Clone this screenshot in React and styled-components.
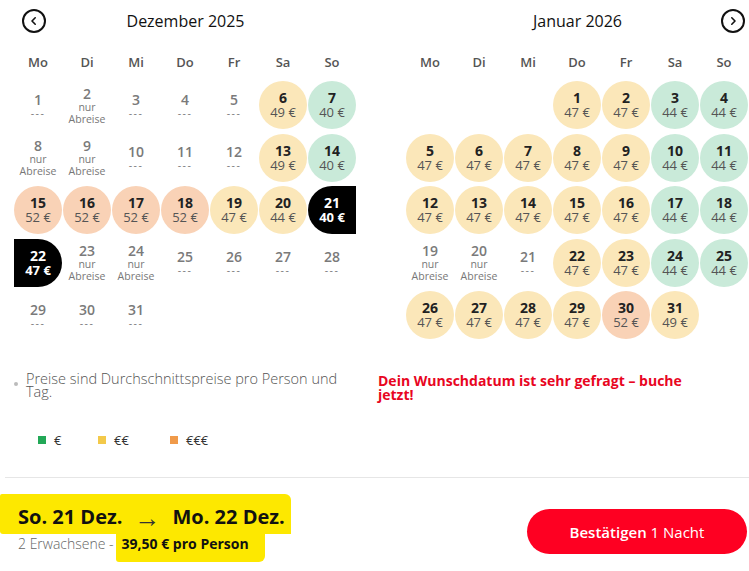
import React from 'react'
import styled, { createGlobalStyle, css } from 'styled-components'

const GlobalStyle = createGlobalStyle`
  * { box-sizing: border-box; }
  body {
    margin: 0;
    background: #fff;
    font-family: "Open Sans", "Noto Sans", sans-serif;
    color: #222;
  }
`

const Page = styled.div`
  width: 749px;
  height: 571px;
  overflow: hidden;
  display: flex;
  flex-direction: column;
`

const Months = styled.div`
  display: flex;
  gap: 49px;
  padding-left: 14px;
`

const Month = styled.section`
  width: 343px;
`

const MonthHead = styled.div`
  height: 42px;
  display: grid;
  grid-template-columns: 1fr auto 1fr;
  align-items: center;
`

const MonthTitle = styled.h2`
  margin: 0;
  font-size: 16px;
  font-weight: 500;
  color: #111;
`

const NavButton = styled.button`
  width: 24px;
  height: 24px;
  border-radius: 50%;
  border: 2px solid #111;
  background: #fff;
  padding: 0;
  display: flex;
  align-items: center;
  justify-content: center;
  cursor: pointer;
  justify-self: ${p => (p.$side === 'right' ? 'end' : 'start')};
  margin: ${p => (p.$side === 'right' ? '0 4px 0 0' : '0 0 0 8px')};
`

const Weekdays = styled.div`
  height: 39px;
  display: grid;
  grid-template-columns: repeat(7, 48px);
  column-gap: 1px;
  align-items: center;
`

const Weekday = styled.span`
  text-align: center;
  font-size: 13px;
  font-weight: 600;
  color: #555;
`

const Days = styled.div`
  display: grid;
  grid-template-columns: repeat(7, 48px);
  grid-auto-rows: 48px;
  column-gap: 1px;
  row-gap: 4.5px;
`

const tones = {
  low: '#c9ead9',
  mid: '#fbe7b9',
  high: '#f9d2b6',
}

const Day = styled.div`
  display: flex;
  flex-direction: column;
  align-items: center;
  justify-content: center;
  text-align: center;
  border-radius: 50%;
  background: ${p => (p.$tone ? tones[p.$tone] : 'transparent')};
  ${p => p.$sel === 'start' && css`
    background: #000;
    border-radius: 24px 0 0 24px;
  `}
  ${p => p.$sel === 'end' && css`
    background: #000;
    border-radius: 0 24px 24px 0;
  `}
`

const DayNum = styled.span`
  display: block;
  font-size: 14px;
  line-height: 15px;
  height: 15px;
  font-weight: ${p => (p.$off ? 600 : 700)};
  color: ${p => (p.$sel ? '#fff' : p.$off ? '#7a7a7a' : '#222')};
`

const Price = styled.span`
  display: block;
  font-size: 13px;
  line-height: 15px;
  height: 15px;
  color: ${p => (p.$sel ? '#fff' : '#555')};
  font-weight: ${p => (p.$sel ? 700 : 400)};
`

const Note = styled.span`
  display: block;
  font-size: 10.5px;
  line-height: 12px;
  height: 12px;
  color: #777;
  letter-spacing: ${p => (p.$dash ? '1.5px' : '0')};
`

const Info = styled.div`
  display: flex;
  padding: 33px 0 0 14px;
  height: 138px;
`

const InfoLeft = styled.div`
  width: 364px;
`

const InfoLine = styled.p`
  margin: 0;
  display: flex;
  gap: 8px;
  font-size: 14.5px;
  line-height: 13px;
  font-weight: 300;
  color: #555;
  padding-right: 14px;
  &::before {
    content: '';
    flex-shrink: 0;
    width: 4px;
    height: 4px;
    margin-top: 10px;
    border-radius: 50%;
    background: #bbb;
  }
`

const Legend = styled.ul`
  list-style: none;
  margin: 33px 0 0 24px;
  padding: 0;
  display: flex;
`

const LegendItem = styled.li`
  display: flex;
  align-items: center;
  gap: 8px;
  width: ${p => p.$w}px;
  font-size: 13px;
  color: #333;
  &::before {
    content: '';
    width: 8px;
    height: 8px;
    background: ${p => p.$color};
  }
`

const Urgent = styled.p`
  margin: 2px 0 0;
  width: 330px;
  font-size: 14px;
  line-height: 13.5px;
  font-weight: 700;
  color: #e8061f;
`

const Divider = styled.hr`
  margin: 0 0 0 5px;
  border: 0;
  border-top: 1px solid #e6e6e6;
`

const Footer = styled.footer`
  display: flex;
  align-items: flex-start;
  justify-content: space-between;
  padding: 16px 2px 0 0;
`

const Summary = styled.div`
  display: flex;
  flex-direction: column;
  align-items: flex-start;
`

const DatesMark = styled.div`
  display: flex;
  align-items: center;
  gap: 12px;
  background: #fde800;
  padding: 10px 6px 4px 18px;
  border-radius: 2px 6px 0 3px;
  font-size: 20px;
  line-height: 26px;
  font-weight: 700;
  color: #111;
`

const Arrow = styled.span`
  font-weight: 300;
  font-size: 26px;
  color: #333;
`

const Guests = styled.p`
  margin: 0;
  padding-left: 18px;
  font-size: 14px;
  line-height: 20px;
  font-weight: 300;
  color: #666;
`

const PriceMark = styled.span`
  background: #fde800;
  margin-left: 2px;
  padding: 4px 16px 9px 6px;
  border-radius: 0 0 6px 3px;
  font-weight: 700;
  color: #111;
`

const Confirm = styled.button`
  margin-top: 15px;
  width: 220px;
  height: 45px;
  border: 0;
  border-radius: 23px;
  background: #fe0022;
  color: #fff;
  font-family: inherit;
  font-size: 15px;
  font-weight: 400;
  cursor: pointer;
  b { font-weight: 600; }
`

const Chevron = ({ dir }) => (
  <svg width="10" height="10" viewBox="0 0 10 10" fill="none" stroke="#111" strokeWidth="1.6" strokeLinecap="round" strokeLinejoin="round">
    {dir === 'left' ? <path d="M6.2 1.8 3 5l3.2 3.2" /> : <path d="M3.8 1.8 7 5 3.8 8.2" />}
  </svg>
)

const weekdays = ['Mo', 'Di', 'Mi', 'Do', 'Fr', 'Sa', 'So']

// null = "---", 'a' = nur Abreise, sonst [Preis, Ton]
const december = {
  offset: 0,
  days: [
    null, 'a', null, null, null, [49, 'mid'], [40, 'low'],
    'a', 'a', null, null, null, [49, 'mid'], [40, 'low'],
    [52, 'high'], [52, 'high'], [52, 'high'], [52, 'high'], [47, 'mid'], [44, 'mid'], [40, 'start'],
    [47, 'end'], 'a', 'a', null, null, null, null,
    null, null, null,
  ],
}

const january = {
  offset: 3,
  days: [
    [47, 'mid'], [47, 'mid'], [44, 'low'], [44, 'low'],
    [47, 'mid'], [47, 'mid'], [47, 'mid'], [47, 'mid'], [47, 'mid'], [44, 'low'], [44, 'low'],
    [47, 'mid'], [47, 'mid'], [47, 'mid'], [47, 'mid'], [47, 'mid'], [44, 'low'], [44, 'low'],
    'a', 'a', null, [47, 'mid'], [47, 'mid'], [44, 'low'], [44, 'low'],
    [47, 'mid'], [47, 'mid'], [47, 'mid'], [47, 'mid'], [52, 'high'], [49, 'mid'],
  ],
}

function DayCell({ n, d }) {
  if (d === null) {
    return (
      <Day>
        <DayNum $off>{n}</DayNum>
        <Note $dash>---</Note>
      </Day>
    )
  }
  if (d === 'a') {
    return (
      <Day>
        <DayNum $off>{n}</DayNum>
        <Note>nur</Note>
        <Note>Abreise</Note>
      </Day>
    )
  }
  const [price, kind] = d
  const sel = kind === 'start' || kind === 'end' ? kind : null
  return (
    <Day $tone={sel ? null : kind} $sel={sel}>
      <DayNum $sel={sel}>{n}</DayNum>
      <Price $sel={sel}>{price} €</Price>
    </Day>
  )
}

function MonthView({ title, data, nav }) {
  return (
    <Month>
      <MonthHead>
        {nav === 'left' ? <NavButton $side="left" aria-label="zurück"><Chevron dir="left" /></NavButton> : <span />}
        <MonthTitle>{title}</MonthTitle>
        {nav === 'right' ? <NavButton $side="right" aria-label="weiter"><Chevron dir="right" /></NavButton> : <span />}
      </MonthHead>
      <Weekdays>
        {weekdays.map(w => <Weekday key={w}>{w}</Weekday>)}
      </Weekdays>
      <Days>
        {Array.from({ length: data.offset }).map((_, i) => <div key={'e' + i} />)}
        {data.days.map((d, i) => <DayCell key={i} n={i + 1} d={d} />)}
      </Days>
    </Month>
  )
}

export default function App() {
  return (
    <Page>
      <GlobalStyle />
      <Months>
        <MonthView title="Dezember 2025" data={december} nav="left" />
        <MonthView title="Januar 2026" data={january} nav="right" />
      </Months>
      <Info>
        <InfoLeft>
          <InfoLine>Preise sind Durchschnittspreise pro Person und Tag.</InfoLine>
          <Legend>
            <LegendItem $color="#22a857" $w={60}>€</LegendItem>
            <LegendItem $color="#f3c94a" $w={72}>€€</LegendItem>
            <LegendItem $color="#f09a4a" $w={80}>€€€</LegendItem>
          </Legend>
        </InfoLeft>
        <Urgent>Dein Wunschdatum ist sehr gefragt – buche jetzt!</Urgent>
      </Info>
      <Divider />
      <Footer>
        <Summary>
          <DatesMark>
            <span>So. 21 Dez.</span>
            <Arrow>→</Arrow>
            <span>Mo. 22 Dez.</span>
          </DatesMark>
          <Guests>
            2 Erwachsene -<PriceMark>39,50 € pro Person</PriceMark>
          </Guests>
        </Summary>
        <Confirm><b>Bestätigen</b> 1 Nacht</Confirm>
      </Footer>
    </Page>
  )
}
